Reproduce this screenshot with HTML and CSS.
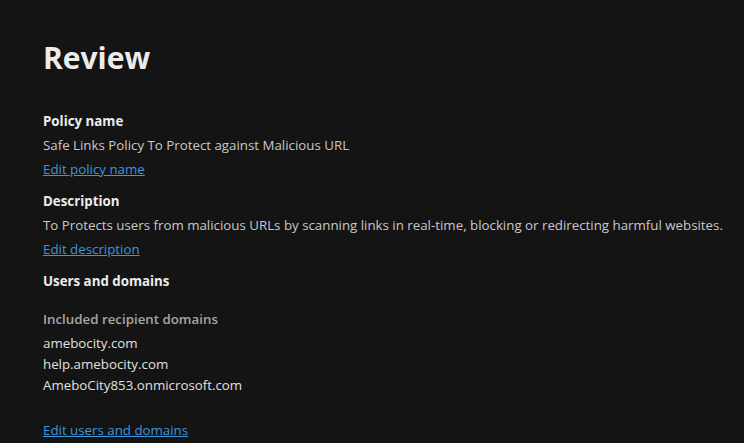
FILE: index.html
```html
<!DOCTYPE html>
<html lang="en">
<head>
    <meta charset="UTF-8"/>
    <title>Review</title>
    <link rel="stylesheet" href="styles.css">
</head>
<body>
<div class="page">
    <h1 class="title">Review</h1>

    <div class="section">
        <div class="label">Policy name</div>
        <div class="value">Safe Links Policy To Protect against Malicious URL</div>
        <a class="edit" href="#">Edit policy name</a>
    </div>

    <div class="section">
        <div class="label">Description</div>
        <div class="value">To Protects users from malicious URLs by scanning links in real-time, blocking or redirecting harmful websites.</div>
        <a class="edit" href="#">Edit description</a>
    </div>

    <div class="section">
        <div class="label">Users and domains</div>
        <div class="sublabel">Included recipient domains</div>
        <ul class="domains">
            <li>amebocity.com</li>
            <li>help.amebocity.com</li>
            <li>AmeboCity853.onmicrosoft.com</li>
        </ul>
        <a class="edit" href="#">Edit users and domains</a>
    </div>
</div>
</body>
</html>
```

FILE: styles.css
```css
html, body {
    margin: 0;
    background-color: #141414;
}

.page {
    padding: 34px 43px 0 43px;
    font-family: "Open Sans", "Noto Sans", sans-serif;
    font-size: 13.3px;
    color: #c8c8c8;
}

.title {
    margin: 0 0 27px 0;
    font-size: 30px;
    font-weight: 700;
    line-height: 48px;
    color: #ececec;
}

.section {
    display: flex;
    flex-direction: column;
    align-items: flex-start;
    margin-bottom: 8px;
}

.label {
    font-weight: 700;
    line-height: 24px;
    color: #ececec;
}

.value {
    line-height: 24px;
    white-space: nowrap;
}

.edit {
    line-height: 24px;
    color: #3a96dd;
}

.sublabel {
    margin: 14px 0 2px 0;
    font-weight: 600;
    line-height: 24px;
    color: #a6a6a6;
}

.domains {
    list-style: none;
    margin: 0 0 22px 0;
    padding: 0;
    color: #e0e0e0;
    line-height: 21px;
}
```
